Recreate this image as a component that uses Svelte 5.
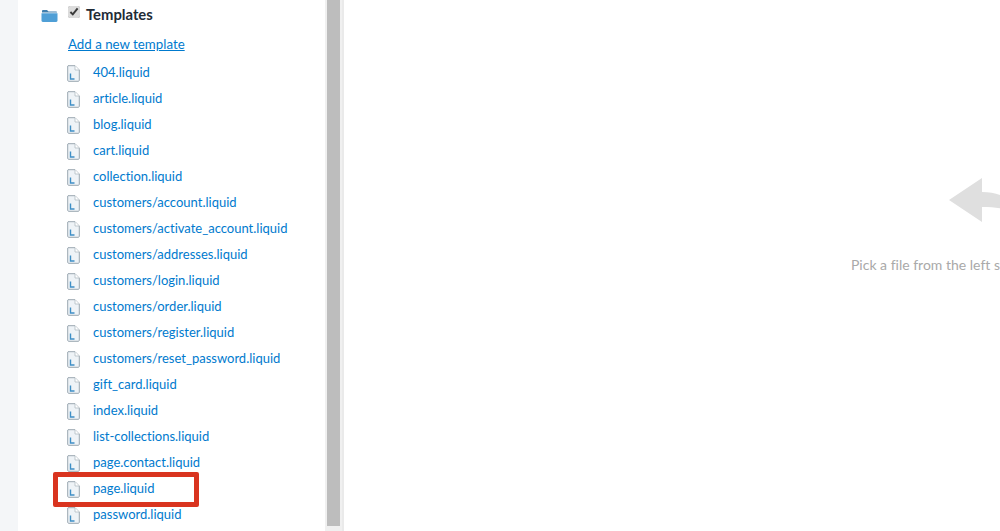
<script>
  const files = ["404.liquid","article.liquid","blog.liquid","cart.liquid","collection.liquid","customers/account.liquid","customers/activate_account.liquid","customers/addresses.liquid","customers/login.liquid","customers/order.liquid","customers/register.liquid","customers/reset_password.liquid","gift_card.liquid","index.liquid","list-collections.liquid","page.contact.liquid","page.liquid","password.liquid"];
</script>

<div class="page">
  <div class="gutter"></div>
  <aside class="sidebar">
    <div class="head">
      <svg class="folder" width="17" height="13" viewBox="0 0 17 13"><path d="M1 2.2 C1 1.4 1.5 1 2.2 1 H6 L7.5 2.6 H15 C15.6 2.6 16 3 16 3.4 H1 Z" fill="#3f7fae"/><path d="M0.5 4.2 H16.5 V11.6 C16.5 12.4 16 13 15.2 13 H1.8 C1 13 0.5 12.4 0.5 11.6 Z" fill="#4f9fd6"/></svg>
      <input class="check" type="checkbox" checked />
      <strong>Templates</strong>
    </div>
    <a class="add" href="#add">Add a new template</a>
    <ul>
      {#each files as f}
        <li>
          <svg width="13" height="17" viewBox="0 0 13 17"><path d="M1 .7 H8 L12.3 5 V15.3 C12.3 15.9 11.9 16.3 11.3 16.3 H1.7 C1.1 16.3 .7 15.9 .7 15.3 V1 Z" fill="#eef3f7" stroke="#9aa7b0" stroke-width="1"/><path d="M8 .8 V5 H12.2" fill="#fff" stroke="#b0bbc3" stroke-width=".8"/><path d="M3.5 8.5 V14 H7.5" fill="none" stroke="#3f8fc6" stroke-width="1.4"/></svg>
          <a href="#f">{f}</a>
        </li>
      {/each}
    </ul>
  </aside>
  <div class="track"><div class="thumb"></div></div>
  <main>
    <svg class="arrow" width="60" height="46" viewBox="0 0 60 46"><path d="M0 22 L33 0 V14 C45 14 55 17 60 24 V32 C52 30 44 29 33 29 V44 Z" fill="#dfdfdf"/></svg>
    <p>Pick a file from the left sidebar to edit</p>
  </main>
  <div class="mark"></div>
</div>

<style>
  :global(body) { margin: 0; background: #fff; }
  .page { position: relative; display: flex; width: 1000px; height: 531px; overflow: hidden; font-family: Lato, Roboto, sans-serif; font-size: 13px; font-variant-ligatures: none; background: #fff; }
  .gutter { width: 18px; flex: none; background: #f4f6f8; }
  .sidebar { width: 307px; flex: none; box-sizing: border-box; padding: 5px 0 0 23px; background: #fff; }
  .head { display: flex; align-items: center; height: 18px; }
  .folder { margin-top: 3px; flex: none; }
  .check { width: 12px; height: 12px; margin: 0 0 4px 10px; accent-color: #dcdcdc; flex: none; }
  strong { margin-left: 6px; font-size: 14.8px; color: #212b36; font-weight: 700; }
  .add { display: block; margin: 12px 0 0 27px; font-size: 13.3px; color: #007ace; line-height: 18px; text-decoration: underline; }
  ul { list-style: none; margin: 6px 0 0 26px; padding: 0; }
  li { display: flex; align-items: center; height: 26px; }
  li svg { flex: none; margin-top: 3px; }
  li a { margin-left: 13px; color: #007ace; text-decoration: none; white-space: nowrap; }
  .track { width: 17px; flex: none; box-sizing: border-box; padding: 0 2px 5px; background: #f0f0f0; }
  .thumb { height: 100%; background: #bdbdbd; }
  main { flex: 1; border-left: 2px solid #eaeaea; padding: 178px 0 0 507px; white-space: nowrap; font-size: 14px; color: #a9a9a9; }
  .arrow { display: block; margin-left: 98px; }
  p { margin: 32px 0 0; line-height: 18px; }
  .mark { position: absolute; left: 53px; top: 472px; width: 146px; height: 35px; box-sizing: border-box; border: 5px solid #d9341f; border-radius: 2px; }
</style>
